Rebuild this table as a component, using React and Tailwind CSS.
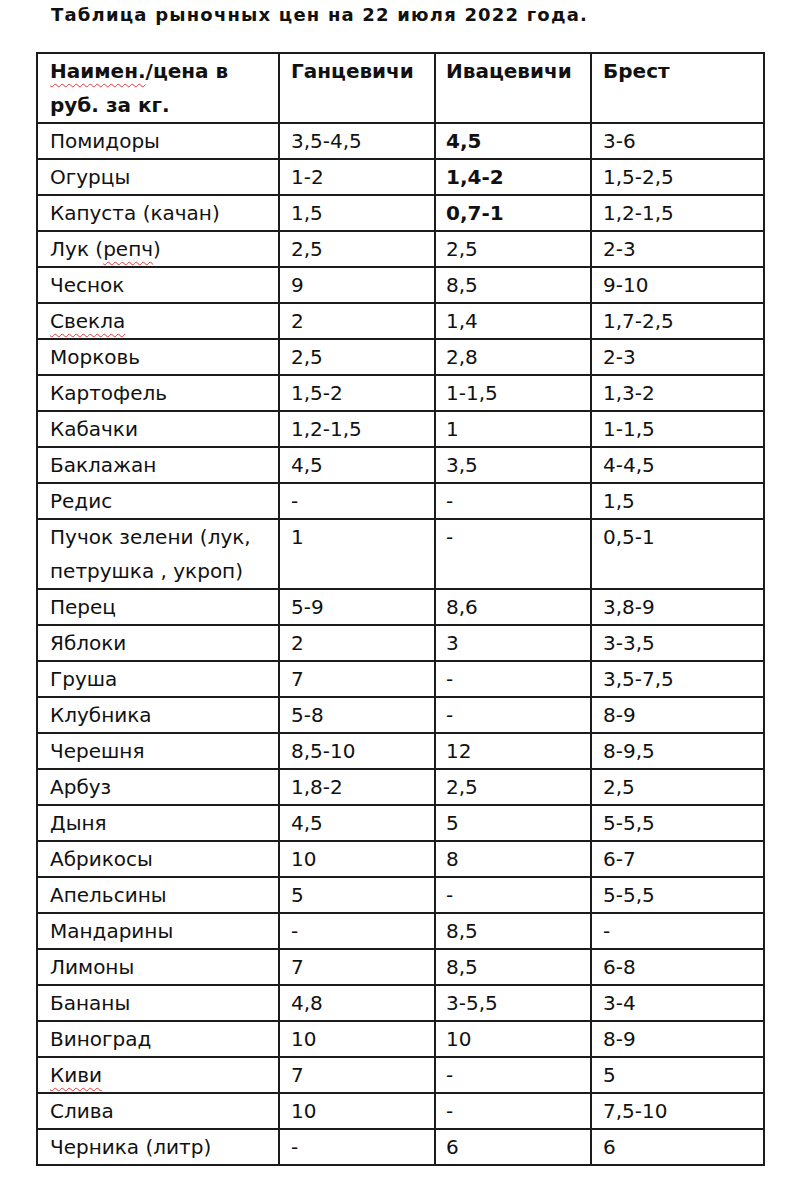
const rows = [
  ["Помидоры", "3,5-4,5", "4,5", "3-6", true],
  ["Огурцы", "1-2", "1,4-2", "1,5-2,5", true],
  ["Капуста (качан)", "1,5", "0,7-1", "1,2-1,5", true],
  ["Лук (репч)", "2,5", "2,5", "2-3"],
  ["Чеснок", "9", "8,5", "9-10"],
  ["Свекла", "2", "1,4", "1,7-2,5"],
  ["Морковь", "2,5", "2,8", "2-3"],
  ["Картофель", "1,5-2", "1-1,5", "1,3-2"],
  ["Кабачки", "1,2-1,5", "1", "1-1,5"],
  ["Баклажан", "4,5", "3,5", "4-4,5"],
  ["Редис", "-", "-", "1,5"],
  ["Пучок зелени", "1", "-", "0,5-1"],
  ["Перец", "5-9", "8,6", "3,8-9"],
  ["Яблоки", "2", "3", "3-3,5"],
  ["Груша", "7", "-", "3,5-7,5"],
  ["Клубника", "5-8", "-", "8-9"],
  ["Черешня", "8,5-10", "12", "8-9,5"],
  ["Арбуз", "1,8-2", "2,5", "2,5"],
  ["Дыня", "4,5", "5", "5-5,5"],
  ["Абрикосы", "10", "8", "6-7"],
  ["Апельсины", "5", "-", "5-5,5"],
  ["Мандарины", "-", "8,5", "-"],
  ["Лимоны", "7", "8,5", "6-8"],
  ["Бананы", "4,8", "3-5,5", "3-4"],
  ["Виноград", "10", "10", "8-9"],
  ["Киви", "7", "-", "5"],
  ["Слива", "10", "-", "7,5-10"],
  ["Черника (литр)", "-", "6", "6"],
];

// spell-check squiggle like in Word
function Squiggle({ children }) {
  return (
    <span className="underline decoration-wavy decoration-[#e5393b] decoration-1 underline-offset-[5px]">
      {children}
    </span>
  );
}

function nameCell(name) {
  if (name === "Лук (репч)") return <>Лук (<Squiggle>репч</Squiggle>)</>;
  if (name === "Свекла") return <Squiggle>Свекла</Squiggle>;
  if (name === "Киви") return <Squiggle>Киви</Squiggle>;
  if (name === "Пучок зелени")
    return (
      <>
        Пучок зелени (лук,
        <br />
        петрушка , укроп)
      </>
    );
  return name;
}

const cell = "border-r-2 border-b-2 border-[#1c1c1c] align-top px-[11px] leading-[34px] whitespace-nowrap";

function App() {
  return (
    <div
      className="bg-white min-h-[1200px] pt-[2px] pl-[36px] text-[#111] text-[20px]"
      style={{ fontFamily: '"DejaVu Sans", sans-serif' }}
    >
      <div className="pl-[15px] text-[18px] leading-[25px] font-bold tracking-[1.2px]">
        Таблица рыночных цен на 22 июля 2022 года.
      </div>

      <table className="mt-[25px] w-[729px] table-fixed border-separate border-spacing-0">
        <colgroup>
          <col className="w-[244px]" />
          <col className="w-[156px]" />
          <col className="w-[156px]" />
          <col className="w-[173px]" />
        </colgroup>
        <thead>
          <tr className="font-bold">
            <th className={`${cell} border-l-2 border-t-2 text-left font-bold pl-[12px]`}>
              <Squiggle>Наимен.</Squiggle>/цена в
              <br />
              руб. за кг.
            </th>
            <th className={`${cell} border-t-2 text-left font-bold`}>Ганцевичи</th>
            <th className={`${cell} border-t-2 text-left font-bold pl-[10px]`}>Ивацевичи</th>
            <th className={`${cell} border-t-2 text-left font-bold`}>Брест</th>
          </tr>
        </thead>
        <tbody>
          {rows.map(([name, a, b, c, strong]) => (
            <tr key={name}>
              <td className={`${cell} border-l-2 pl-[12px]`}>{nameCell(name)}</td>
              <td className={cell}>{a}</td>
              <td className={`${cell} pl-[10px] ${strong ? "font-bold" : ""}`}>{b}</td>
              <td className={cell}>{c}</td>
            </tr>
          ))}
        </tbody>
      </table>
    </div>
  );
}

export default App;
